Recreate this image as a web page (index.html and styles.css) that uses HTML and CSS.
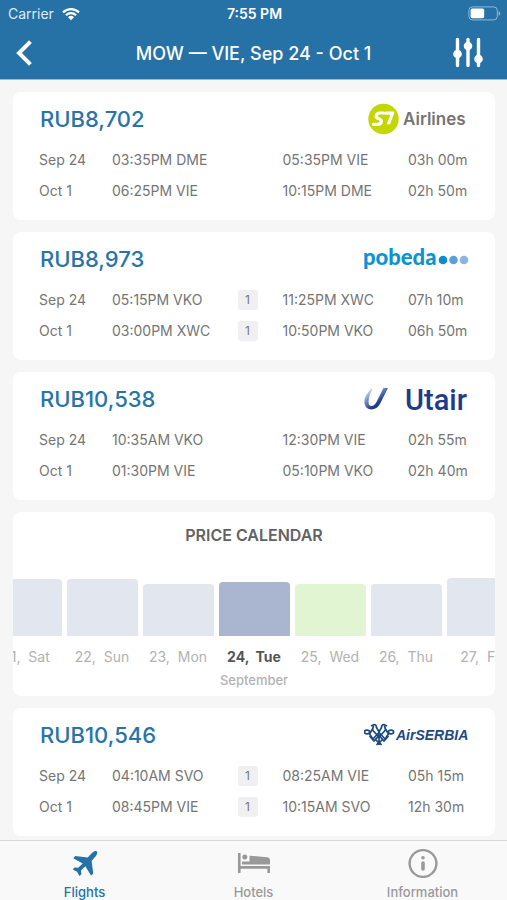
FILE: index.html
```html
<!DOCTYPE html>
<html lang="en">
<head>
<meta charset="utf-8">
<meta name="viewport" content="width=device-width, initial-scale=1">
<title>MOW — VIE</title>
<link rel="stylesheet" href="styles.css">
</head>
<body>
<div class="app">
  <header class="header">
    <div class="status">
      <div class="status-left">
        <span>Carrier</span>
        <svg width="18" height="14" viewBox="0 0 18 14" fill="none" stroke="#fff" stroke-width="2.2" aria-hidden="true">
          <path d="M1 5.4a11.4 11.4 0 0 1 16 0"/><path d="M3.9 8.3a7.2 7.2 0 0 1 10.2 0"/><path d="M9 13.2L6 10.2a4.3 4.3 0 0 1 6 0z" fill="#fff" stroke="none"/>
        </svg>
      </div>
      <div class="status-time">7:55 PM</div>
      <div class="status-right">
        <svg width="33" height="15" viewBox="0 0 33 15" aria-hidden="true">
          <rect x=".9" y=".9" width="28.4" height="13" rx="3.5" fill="none" stroke="#8fb9d8" stroke-width="1"/>
          <rect x="2.6" y="2.6" width="13.6" height="9.6" rx="1.6" fill="#fff"/>
          <path d="M30.6 5v4.8q1.6-.7 1.6-2.4T30.6 5z" fill="#8fb9d8"/>
        </svg>
      </div>
    </div>
    <div class="nav">
      <button class="nav-button" aria-label="Back">
        <svg width="20" height="28" viewBox="0 0 20 28" fill="none" stroke="#fff" stroke-width="4" stroke-linecap="square"><path d="M15 4L5 14l10 10"/></svg>
      </button>
      <h1 class="nav-title">MOW — VIE, Sep 24 - Oct 1</h1>
      <button class="nav-button nav-filter" aria-label="Filters">
        <svg width="30" height="32" viewBox="0 0 30 32" fill="#fff" stroke="#fff" stroke-width="3.4" stroke-linecap="round"><path d="M4.500 2.500v26M15 2.500v26M25.500 2.500v26"/><g stroke="none"><circle cx="4.500" cy="17" r="4.300"/><circle cx="15" cy="9" r="4.300"/><circle cx="25.500" cy="22" r="4.300"/></g></svg>
      </button>
    </div>
  </header>

  <main class="results">
    <article class="card ticket">
      <div class="ticket-head">
        <h2 class="price">RUB8,702</h2>
        <svg class="logo" width="106" height="32" viewBox="0 0 106 32">
          <circle cx="19.500" cy="16" r="15.200" fill="#c4d600"/>
          <path d="M19.500 10h-3.300c-2.500 0-3.800 1-4 2.600-.2 1.500.7 2.300 2.200 3l1.600.8c1.300.6 1.600 1.100 1.400 2.200-.3 1.700-1.500 2.700-3.600 2.700H9.500" fill="none" stroke="#fff" stroke-width="3.200" stroke-linecap="round"/>
          <path d="M21.500 8.500h7.800c1 0 1.300.6 1 1.500l-4.200 11.300h-3.400l3.600-9.600h-5.900z" fill="#fff"/>
          <text class="logo-s7" x="39" y="22">Airlines</text>
        </svg>
      </div>
      <table class="legs">
        <colgroup><col class="c-date"><col><col class="c-stop"><col><col class="c-dur"></colgroup>
        <tr><td>Sep 24</td><td>03:35PM DME</td><td></td><td>05:35PM VIE</td><td>03h 00m</td></tr>
        <tr><td>Oct 1</td><td>06:25PM VIE</td><td></td><td>10:15PM DME</td><td>02h 50m</td></tr>
      </table>
    </article>

    <article class="card ticket">
      <div class="ticket-head">
        <h2 class="price">RUB8,973</h2>
        <svg class="logo" width="106" height="32" viewBox="0 0 106 32">
          <text class="logo-pobeda" x="-1" y="22">pobeda</text>
          <circle cx="79" cy="17" r="4.300" fill="#0c8dc9"/><circle cx="89.500" cy="17" r="4.300" fill="#5b9fd6"/><circle cx="100" cy="17" r="4.300" fill="#8bb5e0"/>
        </svg>
      </div>
      <table class="legs">
        <colgroup><col class="c-date"><col><col class="c-stop"><col><col class="c-dur"></colgroup>
        <tr><td>Sep 24</td><td>05:15PM VKO</td><td><span class="stops">1</span></td><td>11:25PM XWC</td><td>07h 10m</td></tr>
        <tr><td>Oct 1</td><td>03:00PM XWC</td><td><span class="stops">1</span></td><td>10:50PM VKO</td><td>06h 50m</td></tr>
      </table>
    </article>

    <article class="card ticket">
      <div class="ticket-head">
        <h2 class="price">RUB10,538</h2>
        <svg class="logo" width="106" height="32" viewBox="0 0 106 32">
          <defs><linearGradient id="swoosh" x1="0" y1="0" x2=".6" y2=".7"><stop offset="0.05" stop-color="#fff"/><stop offset=".45" stop-color="#8ba6d2"/><stop offset="1" stop-color="#1d3a8f"/></linearGradient></defs>
          <path d="M7 6C2 11 -.5 16 .6 21c1 4.600 5 6.200 9.300 5 3.700-1 5.700-4 7.300-7.600L24 5h-4.600l-6.200 12.500c-1.500 3.200-3 5.300-5.300 5.500-2.600.2-3.600-1.800-3.300-5C5 14 6 10 8.500 6z" fill="url(#swoosh)"/>
          <text class="logo-utair" x="41" y="27">Utair</text>
        </svg>
      </div>
      <table class="legs">
        <colgroup><col class="c-date"><col><col class="c-stop"><col><col class="c-dur"></colgroup>
        <tr><td>Sep 24</td><td>10:35AM VKO</td><td></td><td>12:30PM VIE</td><td>02h 55m</td></tr>
        <tr><td>Oct 1</td><td>01:30PM VIE</td><td></td><td>05:10PM VKO</td><td>02h 40m</td></tr>
      </table>
    </article>

    <section class="card calendar">
      <h2 class="calendar-title">PRICE CALENDAR</h2>
      <div class="days">
        <div class="day"><div class="bar h57"></div><span class="label">21,  Sat</span></div>
        <div class="day"><div class="bar h57"></div><span class="label">22,  Sun</span></div>
        <div class="day"><div class="bar h52"></div><span class="label">23,  Mon</span></div>
        <div class="day current"><div class="bar h54"></div><span class="label">24,  Tue</span><span class="month">September</span></div>
        <div class="day cheap"><div class="bar h52"></div><span class="label">25,  Wed</span></div>
        <div class="day"><div class="bar h52"></div><span class="label">26,  Thu</span></div>
        <div class="day"><div class="bar h58"></div><span class="label">27,  Fri</span></div>
      </div>
    </section>

    <article class="card ticket">
      <div class="ticket-head">
        <h2 class="price">RUB10,546</h2>
        <svg class="logo" width="106" height="32" viewBox="0 0 106 32">
          <g fill="none" stroke="#1c4a80" stroke-width="1.700">
            <path d="M7 7l3-1.500c2 0 2.500 1.500 2.500 3L15 13l2.500-4.500c0-1.500.5-3 2.500-3L23 7"/>
            <path d="M9.500 6.500L8.500 11l6.500 7 6.500-7-1-4.500"/>
            <path d="M8.500 10l-3 5 3.500 5 6-6.500 6 6.500 3.500-5-3-5"/>
            <path d="M5.500 17l4.500 5 5-5.500 5 5.500 4.500-5M11.500 20.500L15 24l3.500-3.500M15 14v12M12.500 26l2.500-3 2.500 3"/>
            <ellipse cx="3" cy="13" rx="2.600" ry="1.900"/><ellipse cx="27" cy="13" rx="2.600" ry="1.900"/>
          </g>
          <text class="logo-serbia" x="32" y="21">AirSERBIA</text>
        </svg>
      </div>
      <table class="legs">
        <colgroup><col class="c-date"><col><col class="c-stop"><col><col class="c-dur"></colgroup>
        <tr><td>Sep 24</td><td>04:10AM SVO</td><td><span class="stops">1</span></td><td>08:25AM VIE</td><td>05h 15m</td></tr>
        <tr><td>Oct 1</td><td>08:45PM VIE</td><td><span class="stops">1</span></td><td>10:15AM SVO</td><td>12h 30m</td></tr>
      </table>
    </article>
  </main>

  <nav class="tabs">
    <a class="tab active" href="#flights">
      <svg width="34" height="30" viewBox="0 0 34 30" fill="currentColor" aria-hidden="true"><path d="M26.500 3.300c2.300-.7 3.200.3 2.600 2.500-.5 1.500-1.400 2.700-2.500 3.800l-3 3.300 1.700 12.600-2.200 2-5.800-9.200-4.300 4.300.4 3.700-2 1.700-2.300-4.300-4.300-2.300 1.700-2 3.700.4 4.500-4.300-9.500-5.300L7.200 8.100l12.500 1.400 3.300-3.400c1-1.100 2-2.300 3.500-2.800z"/></svg>
      <span>Flights</span>
    </a>
    <a class="tab" href="#hotels">
      <svg width="34" height="30" viewBox="0 0 34 30" fill="currentColor" aria-hidden="true"><path d="M1 5h2.600v13H33v7h-2.600v-4.300H3.600V25H1z"/><circle cx="7.800" cy="9" r="2.500"/><path d="M5 16.400v-2.900h7.500V7.700L30 9.200c2 .3 3 1.200 3 3v4.200z"/></svg>
      <span>Hotels</span>
    </a>
    <a class="tab" href="#information">
      <svg width="34" height="30" viewBox="0 0 34 30" aria-hidden="true"><circle cx="17" cy="15.500" r="13.400" fill="none" stroke="currentColor" stroke-width="2.400"/><circle cx="17" cy="9.800" r="1.800" fill="currentColor"/><path d="M17 15v6" stroke="currentColor" stroke-width="3.600" stroke-linecap="round"/></svg>
      <span>Information</span>
    </a>
  </nav>
</div>
</body>
</html>
```
FILE: styles.css
```css
* { box-sizing: border-box; }

body {
  margin: 0;
  background: #f6f6f6;
  color: #757575;
  font-family: Inter, "Liberation Sans", sans-serif;
  font-size: 14px;
}

h1, h2 { margin: 0; }

.app {
  display: flex;
  flex-direction: column;
  height: 100vh;
}

.header {
  flex: none;
  background: #2671a6;
  border-bottom: 1px solid #8fc0e0;
  color: #fff;
}

.status {
  display: grid;
  grid-template-columns: 1fr auto 1fr;
  align-items: center;
  height: 27px;
  padding: 0 6px 0 8px;
}

.status-left {
  display: flex;
  align-items: center;
  gap: 8px;
  color: #dfebf4;
}

.status-time { font-weight: 600; }

.status-right {
  display: flex;
  justify-content: flex-end;
}

.nav {
  display: grid;
  grid-template-columns: 64px 1fr 64px;
  align-items: center;
  height: 52px;
}

.nav-button {
  display: flex;
  align-items: center;
  padding: 0 0 0 14px;
  border: 0;
  background: none;
}

.nav-filter { padding: 0 0 0 10px; }

.nav-title {
  font-size: 18px;
  font-weight: 500;
  text-align: center;
  white-space: nowrap;
}

.results {
  display: flex;
  flex: 1;
  flex-direction: column;
  gap: 12px;
  min-height: 0;
  padding: 12px 12px 4px 13px;
  overflow-y: auto;
  scrollbar-width: none;
}

.card {
  flex: none;
  border-radius: 8px;
  background: #fff;
}

.ticket { padding: 11px 25px 14px 26px; }

.ticket-head {
  display: flex;
  align-items: center;
  justify-content: space-between;
  height: 41px;
  padding: 0 0 9px 1px;
}

.price {
  color: #2873a8;
  font-size: 22px;
  font-weight: 500;
}

.logo { flex: none; }

.logo-s7 { fill: #747474; font: 600 17px Inter, sans-serif; }
.logo-pobeda { fill: #0c93d2; font: 900 22px Lato, sans-serif; }
.logo-utair { fill: #1e3a8c; font: 500 29px Roboto, sans-serif; }
.logo-serbia { fill: #1c4a80; font: italic 700 14px "Liberation Sans", sans-serif; }

.legs {
  width: 100%;
  border-collapse: collapse;
  table-layout: fixed;
}

.legs td {
  height: 31px;
  padding: 0;
  white-space: nowrap;
}

.c-date { width: 73px; }
.c-stop { width: 45px; }
.c-dur { width: 62px; }

.stops {
  display: block;
  width: 20px;
  height: 20px;
  border-radius: 3px;
  background: #f0f0f3;
  font-size: 12px;
  line-height: 20px;
  text-align: center;
}

.calendar {
  height: 184px;
  padding-top: 12px;
  overflow: hidden;
}

.calendar-title {
  color: #626262;
  font-size: 16px;
  font-weight: 600;
  line-height: 22px;
  text-align: center;
}

.days {
  display: flex;
  align-items: flex-start;
  justify-content: center;
  gap: 5px;
  padding-top: 32px;
}

.day {
  display: grid;
  flex: none;
  grid-template-rows: 58px 40px auto;
  align-items: center;
  justify-items: center;
  width: 71px;
  color: #b2b2b2;
}

.bar {
  align-self: end;
  width: 100%;
  border-radius: 4px 4px 0 0;
  background: #e2e6ef;
}

.h52 { height: 52px; }
.h54 { height: 54px; }
.h57 { height: 57px; }
.h58 { height: 58px; }

.label { white-space: pre; }

.current .bar { background: #aab5cf; }
.current .label { color: #555; font-weight: 700; }
.cheap .bar { background: #e1f5d3; }

.month {
  font-size: 13px;
  font-weight: 500;
  line-height: 8px;
}

.tabs {
  display: grid;
  flex: none;
  grid-template-columns: repeat(3, 1fr);
  height: 60px;
  border-top: 1px solid #d8d8d8;
  background: #f9f9f9;
}

.tab {
  display: flex;
  flex-direction: column;
  align-items: center;
  gap: 6px;
  padding-top: 7px;
  color: #999;
  font-size: 13px;
  font-weight: 500;
  line-height: 16px;
  text-decoration: none;
}

.tab.active { color: #2671a6; }
```
